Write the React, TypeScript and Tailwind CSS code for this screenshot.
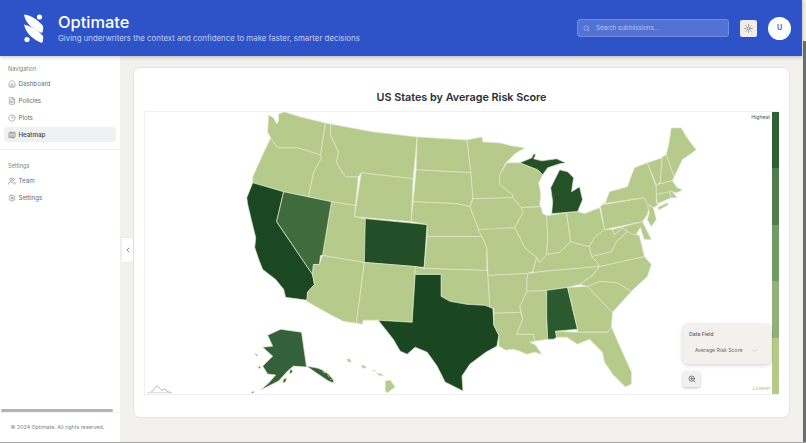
import { Home, FileText, ChartPie, Map as MapIcon, Users, Settings, ChevronLeft, ChevronDown, Search, Sun, ZoomIn } from "lucide-react";

const L = "#b5ca8b";
const AK = "#35613a";
const states: [string, string][] = [
  // West
  ["268,115 273,118 276,124 278,121 278,114 284,112 300,117 325,123 320,155 297,148 277,148 270,138 267,132", L],
  ["270,138 277,148 297,148 320,155 321,158 313,173 308,197 283,192 252,183 252,177 262,155", L],
  ["325,123 330,124 330,135 338,152 336,163 345,177 358,177 355,206 331,202 308,197 313,173 321,158 320,155", L],
  ["330,124 373,132 417,137 413,179 361,173 358,177 345,177 336,163 338,152 330,135", L],
  ["361,173 413,179 411,222 354,217", L],
  ["331,202 355,206 354,217 368,220 364,263 322,256", L],
  ["252,183 283,192 276,222 312,275 313,280 314,285 307,293 307,301 285,298 283,290 275,280 262,270 258,260 254,248 255,238 251,222 247,205 246,198", "#1b4823"],
  ["283,192 331,202 322,256 320,256 319,265 313,265 312,275 276,222", "#3f6b3d"],
  ["322,256 364,263 356,324 343,322 333,317 306,302 307,293 314,285 312,275 313,265 319,265", L],
  ["365,219 427,225 424,268 364,263", "#224f28"],
  ["364,263 415,267 415,275 412,323 378,321 363,321 362,325 356,324", L],
  // Plains
  ["417,137 467,140 471,173 416,170", L],
  ["416,170 471,173 473,198 470,207 457,204 413,202", L],
  ["413,202 457,204 470,207 478,228 482,237 427,237 427,225 411,222", L],
  ["427,237 482,237 487,248 487,271 424,269", L],
  ["415,267 424,269 487,271 488,276 490,308 485,306 467,305 450,302 441,297 441,275 415,275", L],
  ["415,275 441,275 441,297 450,302 467,305 485,306 493,309 494,326 499,336 497,347 486,353 470,365 462,377 463,392 445,383 437,367 427,353 415,348 407,355 400,352 393,340 378,321 412,323", "#1a4722"],
  // Midwest
  ["467,140 482,137 483,142 500,143 512,146 525,148 515,154 506,163 500,175 500,185 513,195 513,198 473,199 471,173", L],
  ["473,199 513,198 522,208 523,213 515,228 480,231 478,228 470,207", L],
  ["478,230 515,228 525,248 537,258 533,272 528,274 488,276 487,248 482,237", L],
  ["507,163 520,163 538,170 543,175 539,183 541,195 540,205 541,207 522,208 513,198 513,195 500,185 500,175", L],
  ["520,163 532,158 534,154 536,155 534,159 542,161 557,159 566,163 560,164 548,168 543,175 538,170", "#245128"],
  ["560,170 568,172 574,178 572,192 580,187 583,200 578,212 552,214 553,202 551,188 555,180", "#245128"],
  ["541,207 543,214 547,216 548,238 547,255 540,263 537,258 525,248 515,228 523,213 522,208", L],
  ["547,216 567,213 571,242 560,253 547,255 548,238", L],
  ["567,213 578,212 585,214 600,208 605,230 595,238 590,247 580,245 571,242", L],
  // South
  ["547,255 560,253 571,242 580,245 590,247 592,257 597,262 600,267 543,272 535,273 533,272 537,258 540,263", L],
  ["528,274 543,272 600,267 593,276 580,285 568,288 547,291 527,292 527,280", L],
  ["488,276 528,274 527,280 527,292 520,307 521,313 494,314 494,309 490,308", L],
  ["494,314 521,313 523,320 517,335 534,335 535,342 530,343 536,346 542,355 535,353 527,355 520,352 513,350 506,351 499,347 499,336 494,326", L],
  ["527,292 547,291 547,317 548,340 535,342 534,335 517,335 523,320 520,307", L],
  ["547,291 568,288 578,330 556,332 557,338 554,340 550,340 548,340 547,317", "#2a5a2e"],
  ["568,288 588,287 600,300 613,313 612,328 608,333 578,333 578,330", L],
  ["556,332 578,333 608,333 612,328 623,353 632,373 632,385 626,388 613,375 605,363 603,353 590,340 578,345 567,338 557,338", L],
  ["588,287 600,282 617,283 632,292 613,313 600,300", L],
  ["580,285 593,276 600,267 645,257 652,265 648,277 632,292 617,283 600,282 588,287", L],
  ["592,257 600,255 612,252 617,242 628,232 640,236 645,257 600,267 597,262", L],
  ["605,230 613,230 615,235 623,228 628,232 617,242 612,252 600,255 592,257 590,247 595,238", L],
  // Northeast
  ["613,230 643,222 648,232 652,240 645,240 641,228 636,236 628,232 623,228 615,235", L],
  ["601,207 603,205 645,198 650,205 648,215 643,222 605,230", L],
  ["648,205 654,208 657,220 652,227 648,220 650,213", L],
  ["603,204 606,203 610,192 628,187 635,168 648,163 657,187 657,203 659,205 654,208 648,204 645,198", L],
  ["648,163 663,158 661,183 657,185", L],
  ["663,157 667,155 675,177 673,181 661,184", L],
  ["667,155 670,142 672,128 682,128 688,138 697,150 683,160 675,177", L],
  ["657,185 673,181 678,188 683,190 678,193 673,192 657,195", L],
  ["657,195 670,192 672,198 658,204", L],
  ["670,192 673,192 678,198 672,198", L],
  ["658,208 668,203 669,205 660,210", L],
  // Alaska
  ["267,336 280,330 301,333 306,368 293,367 287,372 278,382 270,386 260,391 268,384 275,376 267,375 262,367 272,357 262,348 272,347", AK],
  ["306,367 317,369 322,371 328,375 333,381 333,384 328,382 322,378 316,374", AK],
  ["250,394 253,392 253,394", AK],
  ["254,354 257,356 256,357", AK],
  ["257,367 260,368 259,370", AK],
  ["283,380 286,379 285,383 282,384", AK],
  ["289,372 291,370 292,373 289,375", AK],
  // Hawaii
  ["346,360 350,360 351,363 348,363", L],
  ["361,366 365,367 366,369 362,369", L],
  ["372,371 376,372 372,372", L],
  ["376,374 382,375 383,377 378,376", L],
  ["385,382 390,381 395,388 388,393 387,394 385,392", L],
];

function Nav({ icon: Icon, label, active }: { icon: any; label: string; active?: boolean }) {
  return (
    <div className={`flex h-[15px] items-center gap-[3px] rounded-[3px] pl-[3.5px] text-[6.2px] ${active ? "bg-[#eff1f3] font-medium text-[#3f4650]" : "text-[#646a73]"}`}>
      <Icon size={8} strokeWidth={1.5} />
      <span>{label}</span>
    </div>
  );
}

export default function App() {
  return (
    <div className="flex h-[443px] w-[806px] overflow-hidden border-b border-[#a8a8a8] bg-[#f3f1ee] font-['Inter',sans-serif]">
      <div className="relative flex h-full w-[802px] flex-col">
        <header className="z-10 flex h-[56px] shrink-0 items-center bg-[#2e53c8] pl-[24px] pr-[11px] shadow-[0_1px_4px_rgba(0,0,0,0.25)]">
          <svg width="20" height="29" viewBox="0 0 20 29" className="shrink-0">
            <circle cx="15.5" cy="3" r="2.6" fill="#fff" />
            <circle cx="3" cy="25.5" r="2.6" fill="#fff" />
            <path d="M0 0.5 C7 1 15 7 19 12 C19.5 15 19 17 18 19 C10 16 1.5 10 0 0.5 Z" fill="#fff" />
            <path d="M0 10.5 C7 12 15 17 19 22 C19.5 25 19 27 18 29 C10 26 2 20 0 10.5 Z" fill="#fff" />
          </svg>
          <div className="ml-[14px] flex flex-col">
            <div className="text-[16.4px] font-medium leading-[20px] text-white">Optimate</div>
            <div className="text-[7.85px] leading-[12px] text-[#c3cff2]">Giving underwriters the context and confidence to make faster, smarter decisions</div>
          </div>
          <div className="ml-auto flex h-[18px] w-[152px] items-center rounded-[3px] border border-[#6f8ce0] bg-[#5472d4] pl-[5px] text-[6.1px] text-[#b5c4ef]">
            <Search size={7} strokeWidth={1.5} className="text-[#d5def7]" />
            <span className="ml-[6px]">Search submissions...</span>
          </div>
          <div className="ml-[11px] flex h-[17px] w-[17px] items-center justify-center rounded-[2px] bg-[#efedea] text-[#6b6f78]">
            <Sun size={9} strokeWidth={2} />
          </div>
          <div className="ml-[11px] flex h-[23px] w-[23px] items-center justify-center rounded-full bg-white text-[7px] font-semibold text-[#2e53c8]">U</div>
        </header>
        <div className="flex min-h-0 flex-1">
          <aside className="flex w-[120px] shrink-0 flex-col bg-white">
            <div className="flex flex-col gap-[2px] px-[4px] pt-[8px]">
              <div className="mb-px h-[9px] pl-[4px] pt-px text-[5.6px] leading-[9px] text-[#7d838b]">Navigation</div>
              <Nav icon={Home} label="Dashboard" />
              <Nav icon={FileText} label="Policies" />
              <Nav icon={ChartPie} label="Plots" />
              <Nav icon={MapIcon} label="Heatmap" active />
            </div>
            <div className="mt-[7px] h-px bg-[#eef0f2]" />
            <div className="flex flex-col gap-[2px] px-[4px] pt-[11px]">
              <div className="mb-px h-[9px] pl-[4px] pt-px text-[5.6px] leading-[9px] text-[#7d838b]">Settings</div>
              <Nav icon={Users} label="Team" />
              <Nav icon={Settings} label="Settings" />
            </div>
            <div className="mt-auto">
              <div className="ml-px h-[3px] w-[112px] rounded-full bg-[#b4b4b4]" />
              <div className="flex h-[30px] items-center justify-center border-t border-[#f1f1f1] pr-[5px] text-[5.3px] text-[#7d838b]">© 2024 Optimate. All rights reserved.</div>
            </div>
          </aside>
          <main className="relative min-w-0 flex-1 pb-[24px] pl-[13px] pr-[12px] pt-[11px]">
            <div className="absolute left-[2px] top-[182px] flex h-[24px] w-[11px] items-center justify-center rounded-r-[3px] bg-white text-[#4b5563] shadow-[0_0_2px_rgba(0,0,0,0.08)]">
              <ChevronLeft size={8} strokeWidth={2} />
            </div>
            <div className="flex h-full flex-col rounded-[7px] border border-[#e5e3df] bg-white px-[10px] pb-[22px]">
              <h1 className="flex h-[43px] shrink-0 items-end justify-center pb-[5px] text-[10.8px] font-semibold leading-[16px] text-[#2a2e35]">US States by Average Risk Score</h1>
              <div className="relative min-h-0 flex-1 rounded-[2px] border border-[#eef0f2] border-r-0">
                <svg viewBox="145 112 627 283" className="block h-full w-[627px]">
                  {states.map(([points, fill], i) => (
                    <polygon key={i} points={points} fill={fill} stroke="#dfe8cc" strokeWidth={0.7} strokeLinejoin="round" />
                  ))}
                  <path d="M322 372 L325 374 M327 376 L329 378 M330 380 L331 381" stroke="#ffffff" strokeWidth={0.7} />
                  <path d="M150 393 C153 392 154 387 156 387 C158 387 159 392 162 391 C164 390 164 389 165 391 C166 393 168 393 170 393.5" fill="none" stroke="#8a8a8a" strokeWidth={0.6} />
                  <path d="M146 393.7 H171" stroke="#c4c4c4" strokeWidth={0.7} />
                </svg>
                <div className="absolute bottom-0 right-0 top-0 flex w-[7px] flex-col">
                  <div className="flex-1 bg-[#2f5f33]" />
                  <div className="flex-1 bg-[#517d4e]" />
                  <div className="flex-1 bg-[#729a66]" />
                  <div className="flex-1 bg-[#93b07a]" />
                  <div className="flex-1 bg-[#b5ca8b]" />
                </div>
                <div className="absolute right-[9px] top-[2px] text-[5.2px] text-[#4b5a4b]">Highest</div>
                <div className="absolute bottom-[1px] right-[9px] text-[5.2px] text-[#b5ca8b]">Lowest</div>
                <div className="absolute bottom-[30px] right-[8px] flex h-[40px] w-[88px] flex-col rounded-[5px] bg-[#f3f1ee] pl-[6px] pt-[6px] text-[5.2px] shadow-[0_1px_4px_rgba(0,0,0,0.2)]">
                  <div className="leading-[9px] text-[#3f4650]">Data Field</div>
                  <div className="mt-[7px] flex items-center pl-[6px] leading-[9px] text-[#646a73]">
                    Average Risk Score
                    <ChevronDown size={7} strokeWidth={1.5} className="ml-[8px] text-[#9a9a9a]" />
                  </div>
                </div>
                <div className="absolute bottom-[7px] right-[79px] flex h-[16px] w-[17px] items-center justify-center rounded-[3px] bg-[#f3f1ee] text-[#374151] shadow-[0_1px_3px_rgba(0,0,0,0.25)]">
                  <ZoomIn size={8} strokeWidth={2} />
                </div>
              </div>
            </div>
          </main>
        </div>
      </div>
      <div className="flex w-[4px] flex-col bg-[#efedea]">
        <div className="ml-px mt-[41px] h-full w-[3px] bg-[#6d6d6d]" />
      </div>
    </div>
  );
}
